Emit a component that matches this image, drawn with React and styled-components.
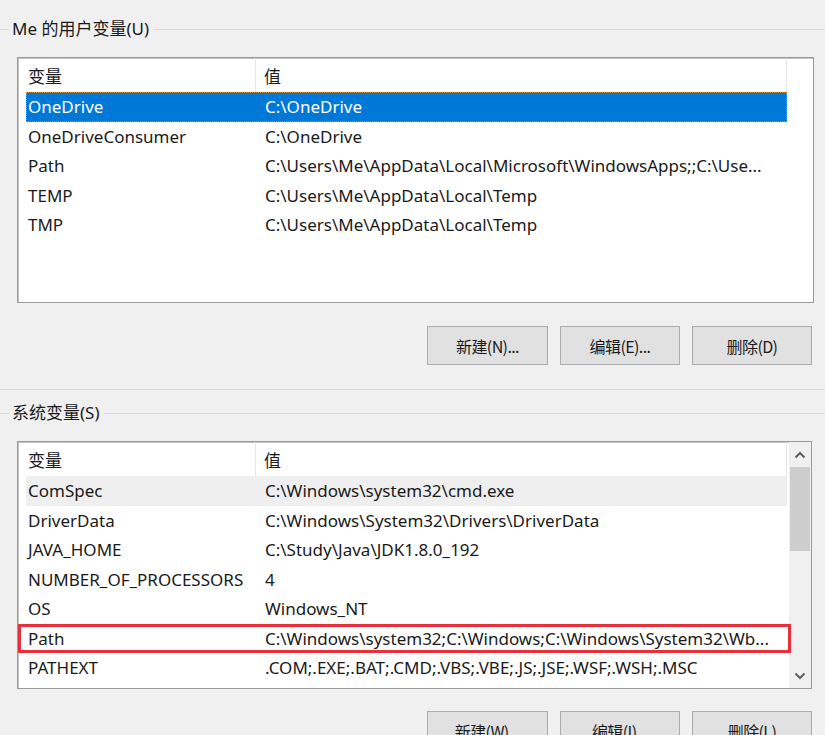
import React from 'react'
import styled, { createGlobalStyle } from 'styled-components'

const GlobalStyle = createGlobalStyle`
  html, body {
    margin: 0;
    padding: 0;
    background: #f0f0f0;
  }
  body {
    font-family: "Noto Sans", "Noto Sans CJK SC", sans-serif;
    color: #1a1a1a;
  }
`;

const Page = styled.div`
  width: 825px;
  height: 735px;
  overflow: hidden;
  background: #f0f0f0;
  padding-top: 19px;
  box-sizing: border-box;
`;

const Group = styled.section`
  border-bottom: ${p => (p.$last ? 'none' : '1px solid #dcdcdc')};
  padding-bottom: ${p => (p.$last ? '0' : '24px')};
  margin-bottom: 13px;
`;

const GroupTitle = styled.div`
  display: flex;
  align-items: center;
  height: 20px;
  font-size: 17px;
  line-height: 20px;
  white-space: nowrap;

  &::before {
    content: '';
    width: 9px;
    border-top: 1px solid #dcdcdc;
    margin-right: 3px;
  }

  &::after {
    content: '';
    flex: 1;
    border-top: 1px solid #dcdcdc;
    margin-left: 4px;
  }
`;

const ListBox = styled.div`
  margin: 18px 0 0 17px;
  width: ${p => p.$width}px;
  height: ${p => p.$height}px;
  box-sizing: border-box;
  border: 1px solid #9a9a9a;
  box-shadow: inset 1px 1px 0 #c4c4c4;
  background: #fff;
  display: flex;
  overflow: hidden;
`;

const ListBody = styled.div`
  flex: 1;
  display: flex;
  flex-direction: column;
`;

const HeaderRow = styled.div`
  display: flex;
  height: 34px;
  flex-shrink: 0;
  font-size: 17px;
`;

const HeaderCell = styled.div`
  width: ${p => p.$width}px;
  box-sizing: border-box;
  padding-left: ${p => p.$pad}px;
  display: flex;
  align-items: center;
  border-right: 1px solid #e5e5e5;
`;

const Row = styled.div`
  position: relative;
  display: flex;
  align-items: center;
  height: 29.5px;
  flex-shrink: 0;
  margin-left: 8px;
  width: ${p => p.$width}px;
  box-sizing: border-box;
  font-size: 17px;
  white-space: nowrap;
  background: ${p => (p.$selected ? '#0078d7' : p.$hover ? '#efefef' : 'transparent')};
  color: ${p => (p.$selected ? '#fff' : '#1a1a1a')};
  outline: ${p => (p.$selected ? '1px dotted #c98a3a' : 'none')};
  outline-offset: -1px;

  &::after {
    content: '';
    display: ${p => (p.$marked ? 'block' : 'none')};
    position: absolute;
    left: -8px;
    right: -4px;
    top: 0;
    bottom: 0;
    border: 3px solid #e8303a;
  }
`;

const NameCell = styled.div`
  width: 229px;
  padding-left: 2px;
  flex-shrink: 0;
`;

const ValueCell = styled.div`
  padding-left: 8px;
  overflow: hidden;
`;

const ScrollBar = styled.div`
  width: 22px;
  background: #f0f0f0;
  display: flex;
  flex-direction: column;
  align-items: stretch;
`;

const ScrollArrow = styled.div`
  height: 25px;
  display: flex;
  align-items: center;
  justify-content: center;
  color: #606060;
  margin-top: ${p => (p.$bottom ? 'auto' : '0')};
`;

const Thumb = styled.div`
  height: 84px;
  margin: 0 1px;
  background: #cdcdcd;
`;

const ButtonRow = styled.div`
  display: flex;
  justify-content: flex-end;
  gap: 12px;
  padding-right: 13px;
  margin-top: ${p => p.$top}px;
`;

const Button = styled.button`
  width: ${p => p.$width || 120}px;
  height: 39px;
  background: #e1e1e1;
  border: 1px solid #adadad;
  font-family: "Noto Sans CJK SC", "Noto Sans", sans-serif;
  font-size: 16px;
  color: #1a1a1a;
  padding: 0;
  letter-spacing: -0.6px;
`;

const Chevron = ({ up }) =>
  <svg width="12" height="8" viewBox="0 0 12 8">
    <path
      d={ up ? 'M1.5 6.5 L6 2 L10.5 6.5' : 'M1.5 1.5 L6 6 L10.5 1.5' }
      fill="none"
      stroke="currentColor"
      strokeWidth="2"
    />
  </svg>

const userVars = [
  { name: 'OneDrive', value: 'C:\\OneDrive', selected: true },
  { name: 'OneDriveConsumer', value: 'C:\\OneDrive' },
  { name: 'Path', value: 'C:\\Users\\Me\\AppData\\Local\\Microsoft\\WindowsApps;;C:\\Use...' },
  { name: 'TEMP', value: 'C:\\Users\\Me\\AppData\\Local\\Temp' },
  { name: 'TMP', value: 'C:\\Users\\Me\\AppData\\Local\\Temp' },
];

const systemVars = [
  { name: 'ComSpec', value: 'C:\\Windows\\system32\\cmd.exe', hover: true },
  { name: 'DriverData', value: 'C:\\Windows\\System32\\Drivers\\DriverData' },
  { name: 'JAVA_HOME', value: 'C:\\Study\\Java\\JDK1.8.0_192' },
  { name: 'NUMBER_OF_PROCESSORS', value: '4' },
  { name: 'OS', value: 'Windows_NT' },
  { name: 'Path', value: 'C:\\Windows\\system32;C:\\Windows;C:\\Windows\\System32\\Wb...', marked: true },
  { name: 'PATHEXT', value: '.COM;.EXE;.BAT;.CMD;.VBS;.VBE;.JS;.JSE;.WSF;.WSH;.MSC' },
];

const VarList = ({ vars, width, height, rowWidth, scroll }) =>
  <ListBox $width={ width } $height={ height }>
    <ListBody>
      <HeaderRow>
        <HeaderCell $width={ 238 } $pad={ 10 }>变量</HeaderCell>
        <HeaderCell $width={ rowWidth - 230 } $pad={ 8 }>值</HeaderCell>
      </HeaderRow>
      {vars.map( v =>
        <Row
          key={ v.name }
          $width={ rowWidth }
          $selected={ v.selected }
          $hover={ v.hover }
          $marked={ v.marked }
        >
          <NameCell>{ v.name }</NameCell>
          <ValueCell>{ v.value }</ValueCell>
        </Row>
      )}
    </ListBody>
    {scroll &&
      <ScrollBar>
        <ScrollArrow><Chevron up /></ScrollArrow>
        <Thumb />
        <ScrollArrow $bottom><Chevron /></ScrollArrow>
      </ScrollBar>
    }
  </ListBox>

const App = () =>
  <Page>
    <GlobalStyle />

    <Group>
      <GroupTitle>Me 的用户变量(U)</GroupTitle>
      <VarList vars={ userVars } width={ 797 } height={ 246 } rowWidth={ 761 } />
      <ButtonRow $top={ 23 }>
        <Button $width={ 121 }>新建(N)...</Button>
        <Button>编辑(E)...</Button>
        <Button>删除(D)</Button>
      </ButtonRow>
    </Group>

    <Group $last>
      <GroupTitle>系统变量(S)</GroupTitle>
      <VarList vars={ systemVars } width={ 795 } height={ 248 } rowWidth={ 761 } scroll />
      <ButtonRow $top={ 22 }>
        <Button $width={ 121 }>新建(W)...</Button>
        <Button>编辑(I)...</Button>
        <Button>删除(L)</Button>
      </ButtonRow>
    </Group>
  </Page>

export default App
